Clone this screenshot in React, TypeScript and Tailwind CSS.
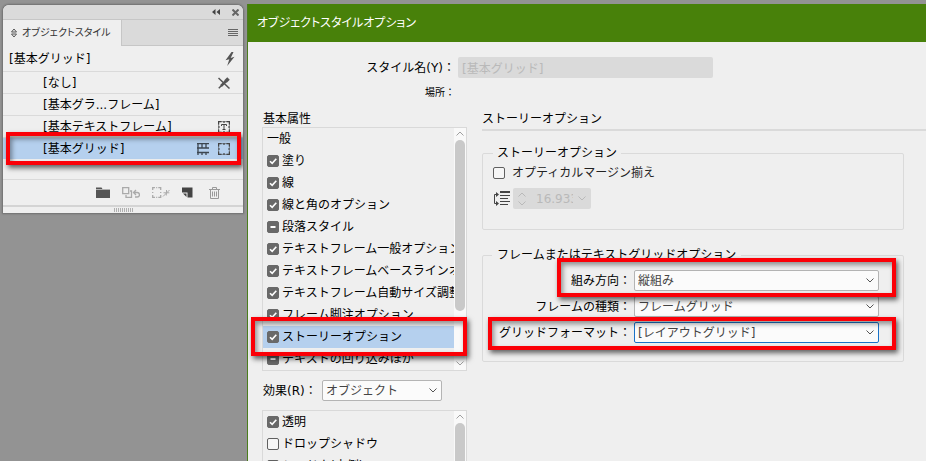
import type { ReactNode } from "react";
import { clsx } from "clsx";

const basicAttributes = [
  { label: "塗り", state: "on" },
  { label: "線", state: "on" },
  { label: "線と角のオプション", state: "on" },
  { label: "段落スタイル", state: "mixed" },
  { label: "テキストフレーム一般オプション", state: "on" },
  { label: "テキストフレームベースラインオプション", state: "on" },
  { label: "テキストフレーム自動サイズ調整オプション", state: "on" },
  { label: "フレーム脚注オプション", state: "on" },
  { label: "ストーリーオプション", state: "on", selected: true },
  { label: "テキストの回り込みほか", state: "mixed" },
];

const effects = [
  { label: "透明", state: "on" },
  { label: "ドロップシャドウ", state: "off" },
  { label: "シャドウ(内側)", state: "off" },
];

// Red frame that calls out a setting
function Callout({ className }: { className: string }) {
  return (
    <div
      className={clsx(
        "pointer-events-none absolute z-10 border-4 border-[#fb0007] shadow-[2px_3px_5px_rgba(0,0,0,0.6),inset_2px_3px_5px_rgba(0,0,0,0.4)]",
        className,
      )}
    />
  );
}

function Chevron({ className, up = false }: { className?: string; up?: boolean }) {
  return (
    <svg viewBox="0 0 8 5" className={clsx("h-[5px] w-2", className)} fill="none" stroke="currentColor">
      <path d={up ? "M0.5 4.5 4 1l3.5 3.5" : "M0.5 0.5 4 4l3.5-3.5"} />
    </svg>
  );
}

function CheckBox({ id, state }: { id: string; state: string }) {
  return (
    <span className="relative flex size-3 shrink-0">
      <input
        id={id}
        type="checkbox"
        defaultChecked={state === "on"}
        className={clsx(
          "size-3 appearance-none rounded-xs border",
          state === "off" ? "border-[#606060] bg-[#f6f6f6]" : "border-[#696969] bg-[#696969]",
        )}
      />
      {state !== "off" && (
        <svg viewBox="0 0 12 12" className="pointer-events-none absolute inset-0 size-3" fill="none" stroke="#fff">
          {state === "on" ? <path d="M3 6.2 5.2 8.4 9.3 3.8" strokeWidth="1.6" /> : <path d="M3.5 6h5" strokeWidth="2" />}
        </svg>
      )}
    </span>
  );
}

function Select({ id, value, className }: { id: string; value: string; className?: string }) {
  return (
    <span className="relative flex">
      <select
        id={id}
        defaultValue={value}
        className={clsx(
          "h-[21px] appearance-none rounded-xs border bg-[#fbfbfb] pr-5 pl-[3px] text-[12px] leading-[18px] text-[#444]",
          className,
        )}
      >
        <option>{value}</option>
      </select>
      <Chevron className="pointer-events-none absolute top-2 right-[5px] text-[#555]" />
    </span>
  );
}

function ListBox({ className, thumb, children }: { className: string; thumb: string; children: ReactNode }) {
  return (
    <div className={clsx("flex overflow-hidden border border-[#d9d9d9]", className)}>
      <ul className="min-w-0 flex-1 overflow-hidden">{children}</ul>
      <div className="flex w-3 shrink-0 flex-col items-center justify-between bg-[#f9f9f9] text-[#a0a0a0]">
        <div className="flex w-full flex-col items-center gap-1 pt-[3px]">
          <Chevron up />
          <div className={clsx("w-[10px] rounded-full bg-[#c9c9c9]", thumb)} />
        </div>
        <Chevron className="mb-1" />
      </div>
    </div>
  );
}

function ListItem({ label, state, selected }: { label: string; state: string; selected?: boolean }) {
  return (
    <li className={clsx("flex h-[22px] items-center gap-[3px] pl-1 whitespace-nowrap", selected && "bg-[#b5d0ee]")}>
      <CheckBox id={label} state={state} />
      <label htmlFor={label}>{label}</label>
    </li>
  );
}

// Frame with ticked edges, shared by several palette icons
function FrameIcon({ letter = false }: { letter?: boolean }) {
  return (
    <svg viewBox="0 0 12 12" className="size-3" fill="none" stroke="#444">
      <path d="M0.6 0.6h10.8v10.8H0.6z" strokeWidth="1" strokeOpacity="0.55" />
      <path d="M0.6 3.500V0.600H3.500M8.500 0.600h2.900V3.500M11.400 8.500v2.900H8.500M3.500 11.400H0.600V8.500M6 0v2M6 10v2M0 6h2M10 6h2" strokeWidth="1.200" />
      {letter && <path d="M3.500 5V3.500h5V5M6 3.500v5M4.500 8.500h3" />}
    </svg>
  );
}

function StyleRow({ label, icons, selected }: { label: string; icons?: ReactNode; selected?: boolean }) {
  return (
    <li
      className={clsx(
        "relative flex h-[22px] items-center justify-between border-t border-[#dadada] pr-[13px] pl-10",
        selected && "bg-[#b5d0ee]",
      )}
    >
      <span>{label}</span>
      <span className="flex items-center gap-[9px]">{icons}</span>
      {selected && <Callout className="-top-[6px] right-[2px] -bottom-[6px] left-[3px]" />}
    </li>
  );
}

function StylePalette() {
  return (
    <aside className="mt-[5px] w-60 shrink-0 self-start overflow-hidden rounded-t-md bg-[#efefef] shadow-[0_0_2px_1px_rgba(0,0,0,0.25)]">
      <div className="flex h-[14px] items-center justify-end gap-3 bg-[#dadada] pr-1">
        <button aria-label="折りたたむ">
          <svg viewBox="0 0 8 6" className="h-[6px] w-2" fill="#444">
            <path d="M3.500 0v6L0 3zM8 0v6L4.500 3z" />
          </svg>
        </button>
        <button aria-label="閉じる">
          <svg viewBox="0 0 7 7" className="size-[7px]" stroke="#666" strokeWidth="2">
            <path d="m0.500 0.500 6 6M6.500 0.500l-6 6" />
          </svg>
        </button>
      </div>
      <div className="flex h-[27px] items-stretch justify-between bg-[#dadada]">
        <button className="flex items-center gap-[5px] border-t border-r border-[#c6c6c6] bg-[#efefef] pr-[10px] pl-2 text-[10px] text-[#333] [font-feature-settings:'palt']">
          <svg viewBox="0 0 6 10" className="h-[10px] w-[6px]" fill="none" stroke="#555">
            <path d="M0.500 4 3 1l2.500 3zM0.500 6 3 9l2.500-3z" />
          </svg>
          オブジェクトスタイル
        </button>
        <button aria-label="メニュー" className="flex-1 border-t border-b border-[#c6c6c6]">
          <svg viewBox="0 0 10 7" className="mr-[5px] ml-auto h-[7px] w-[10px]" stroke="#666">
            <path d="M0 0.500h10M0 2.500h10M0 4.500h10M0 6.500h10" />
          </svg>
        </button>
      </div>
      <div className="flex h-[25px] items-center justify-between pr-2 pl-[6px]">
        <span>[基本グリッド]</span>
        <svg viewBox="0 0 10 14" className="h-[14px] w-[10px]" fill="#555">
          <path d="M6.500 0 0.500 8.200 4.300 7.200 2.200 14 9.500 4.800 5.700 6 8.500 0z" />
        </svg>
      </div>
      <ul>
        <StyleRow
          label="[なし]"
          icons={
            <svg viewBox="0 0 12 12" className="size-3" fill="none" stroke="#555">
              <path d="m0.500 1 11 10.500" strokeWidth="1.500" />
              <path d="M0.800 11.300 4 8" strokeWidth="1.500" />
              <path d="M3 9 8 4" strokeWidth="2.500" />
              <path d="M7.500 4.500 10.500 1.500" strokeWidth="3.500" />
            </svg>
          }
        />
        <StyleRow label="[基本グラ...フレーム]" />
        <StyleRow label="[基本テキストフレーム]" icons={<FrameIcon letter />} />
        <StyleRow
          label="[基本グリッド]"
          selected
          icons={
            <>
              <svg viewBox="0 0 12 12" className="size-3" fill="none" stroke="#3c4650" strokeWidth="1.300">
                <path d="M0 0.700h12M0 5h12M0 9.500h12M1 0v12M5 0.700V5M9 0.700V5M5 9.500V12M9 9.500V12" />
              </svg>
              <FrameIcon />
            </>
          }
        />
      </ul>
      <div className="h-[21px] border-b border-[#dadada]" />
      <div className="flex h-[25px] items-center justify-end gap-3 pr-[23px]">
        <button aria-label="グループ">
          <svg viewBox="0 0 14 11" className="h-[11px] w-[14px]" fill="#555">
            <path d="M0 0.500h5.500l1 1.500H14v9H0z" />
            <path d="M0 2.500h14" stroke="#efefef" strokeWidth="0.600" />
          </svg>
        </button>
        <button aria-label="属性を消去">
          <svg viewBox="0 0 18 11" className="h-[11px] w-[18px]" fill="none" stroke="#aaa" strokeWidth="1.300">
            <path d="M0.700 0.700h6v6h-6zM4 8v2.300h5.500V4H8M12 5.500h3.200a2.200 2.200 0 0 1 0 4.500H13M14 3l-2.500 2.500L14 8" />
          </svg>
        </button>
        <button aria-label="オーバーライドを消去">
          <svg viewBox="0 0 18 11" className="h-[11px] w-[18px]" fill="none" stroke="#aaa" strokeWidth="1.300">
            <path d="M0.700 3V0.700H3M6.300 0.700h2.400V3M8.700 8v2.300H6.300M3 10.300H0.700V8M4.200 0.700h1M4.200 10.300h1M0.700 5v1M8.700 5v1" />
            <path d="m11 9.500 6.500-6.500M11.500 5.800h2.800v2.700M14.500 3v2.800h2.800" strokeWidth="1" />
          </svg>
        </button>
        <button aria-label="新規スタイル">
          <svg viewBox="0 0 11 11" className="size-[11px]" fill="#444">
            <path d="M0 0.500h10.500v10H5.500v-5H0z" />
            <path d="M1 6.500h3.500V10z" />
          </svg>
        </button>
        <button aria-label="削除" className="ml-1">
          <svg viewBox="0 0 11 12" className="h-3 w-[11px]" fill="none" stroke="#999">
            <path d="M0 2.500h11M3.500 2.500v-2h4v2M1.500 2.500v9h8v-9M3.500 4.500v5M5.500 4.500v5M7.500 4.500v5" />
          </svg>
        </button>
      </div>
      <div className="flex h-2 items-center justify-center border-t-2 border-[#d4d4d4]">
        <svg viewBox="0 0 19 4" className="h-1 w-[19px]" stroke="#b0b0b0">
          <path d="M0.500 0v4M2.500 0v4M4.500 0v4M6.500 0v4M8.500 0v4M10.500 0v4M12.500 0v4M14.500 0v4M16.500 0v4M18.500 0v4" />
        </svg>
      </div>
    </aside>
  );
}

function StoryOptions() {
  return (
    <section className="min-w-0 flex-1">
      <h2 className="h-[21px] border-b-2 border-[#dadada] leading-[18px]">ストーリーオプション</h2>
      <div className="pr-[22px]">
        <fieldset className="mt-[13px] rounded-xs border border-[#dadada] px-[10px] pb-5">
          <legend className="px-1 leading-[18px]">ストーリーオプション</legend>
          <div className="flex h-[22px] items-center gap-[7px]">
            <CheckBox id="optical" state="off" />
            <label htmlFor="optical" className="text-[#222]">オプティカルマージン揃え</label>
          </div>
          <div className="mt-1 flex items-center gap-[3px]">
            <svg viewBox="0 0 17 15" className="h-[15px] w-[17px]" fill="none" stroke="#444">
              <path d="M7 1h10" strokeWidth="2" />
              <path d="M7 4.500h10M7 7.500h8M7 10.500h10M7 13.500h8M1.500 12.500v-9H4M1.500 12.500H4" />
              <path d="M3 1v5l3-2.500zM3 10v5l3-2.500z" fill="#444" stroke="none" />
            </svg>
            <div className="flex h-[21px] w-[78px] items-center rounded-xs bg-[#dadada] px-[5px] text-[#b9b9b9]">
              <span className="flex flex-col gap-1">
                <Chevron up />
                <Chevron />
              </span>
              <input
                aria-label="サイズ"
                disabled
                defaultValue="16.933 pt"
                className="ml-[10px] w-[37px] bg-transparent text-[12px]"
              />
              <Chevron className="ml-auto" />
            </div>
          </div>
        </fieldset>
        <fieldset className="mt-4 rounded-xs border border-[#dadada] px-[9px] pb-[18px]">
          <legend className="px-[5px] leading-[18px]">フレームまたはテキストグリッドオプション</legend>
          <div className="mt-[6px] grid w-[387px] max-w-full grid-cols-[1fr_245px] gap-y-[5px]">
            <div className="relative col-span-2 grid grid-cols-subgrid items-center">
              <label htmlFor="direction" className="pr-[3px] text-right">組み方向：</label>
              <Select id="direction" value="縦組み" className="w-full border-[#b4b4b4]" />
              <Callout className="-top-3 -right-[17px] -bottom-[6px] left-[65px]" />
            </div>
            <div className="col-span-2 grid grid-cols-subgrid items-center">
              <label htmlFor="kind" className="pr-[3px] text-right">フレームの種類：</label>
              <Select id="kind" value="フレームグリッド" className="w-full border-[#b4b4b4]" />
            </div>
            <div className="relative col-span-2 grid grid-cols-subgrid items-center">
              <label htmlFor="format" className="pr-[3px] text-right">グリッドフォーマット：</label>
              <Select id="format" value="[レイアウトグリッド]" className="w-full border-[#1a73c8]" />
              <Callout className="-top-[5px] -right-[17px] -bottom-[7px] -left-1" />
            </div>
          </div>
        </fieldset>
      </div>
    </section>
  );
}

function StyleOptionsDialog() {
  return (
    <main className="mt-1 min-w-0 flex-1 border-l border-[#4b7d1d] bg-[#efefef]">
      <h1 className="flex h-[38px] items-center bg-[#48810a] pl-[9px] text-[12px] text-white [font-feature-settings:'palt']">
        オブジェクトスタイルオプション
      </h1>
      <div className="flex items-center pt-[15px] pl-[10px]">
        <label htmlFor="style-name" className="w-[200px] pr-[3px] text-right">スタイル名(Y)：</label>
        <input
          id="style-name"
          disabled
          defaultValue="[基本グリッド]"
          className="h-[21px] w-[255px] rounded-xs bg-[#dadada] px-1 text-[12px] text-[#b9b9b9]"
        />
      </div>
      <div className="mt-[6px] w-[210px] pr-[3px] text-right text-[10px] leading-[18px]">場所：</div>
      <div className="mt-2 flex gap-[15px] pl-[14px]">
        <section className="w-[205px] shrink-0">
          <h2 className="h-[17px] pl-px leading-[18px]">基本属性</h2>
          <div className="relative">
            <ListBox className="h-[244px]" thumb="h-[171px]">
              <li className="flex h-[22px] items-center pl-1">一般</li>
              {basicAttributes.map((item) => (
                <ListItem key={item.label} {...item} />
              ))}
            </ListBox>
            <Callout className="right-0 bottom-[15px] -left-[11px] h-[39px]" />
          </div>
          <div className="my-[9px] flex items-center justify-between pr-[25px] pl-px">
            <label htmlFor="effect">効果(R)：</label>
            <Select id="effect" value="オブジェクト" className="w-[120px] border-[#b4b4b4]" />
          </div>
          <ListBox className="h-[244px]" thumb="h-[171px]">
            {effects.map((item) => (
              <ListItem key={item.label} {...item} />
            ))}
          </ListBox>
        </section>
        <StoryOptions />
      </div>
    </main>
  );
}

export default function App() {
  return (
    <div className="flex h-screen gap-1 overflow-hidden bg-[#939393] pl-[3px] font-['DejaVu_Sans','Noto_Sans_CJK_JP',sans-serif] text-[12px] leading-[18px] text-black">
      <StylePalette />
      <StyleOptionsDialog />
    </div>
  );
}
